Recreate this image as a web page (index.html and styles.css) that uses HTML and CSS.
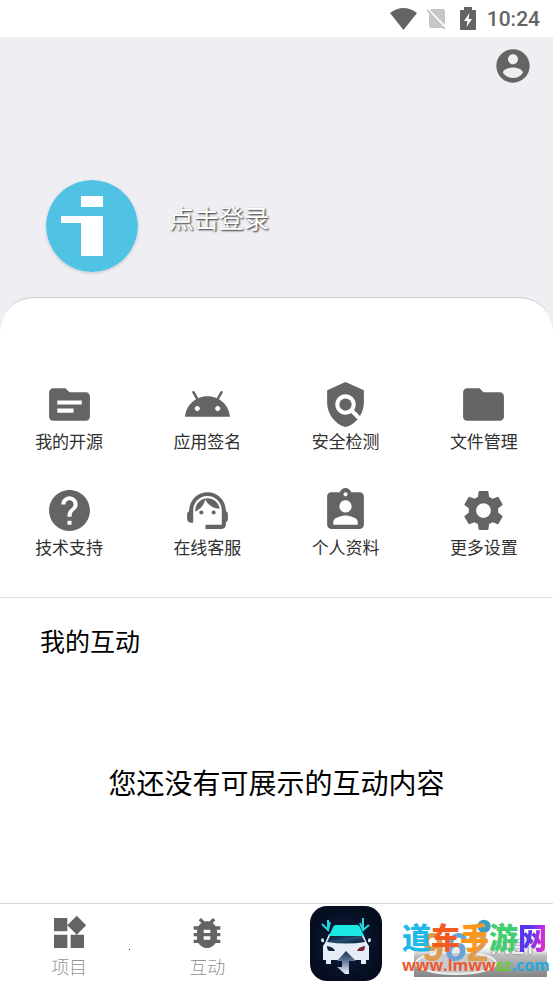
FILE: index.html
```html
<!DOCTYPE html>
<html lang="zh-CN">
<head>
<meta charset="utf-8">
<meta name="viewport" content="width=device-width, initial-scale=1">
<title>我的</title>
<link rel="stylesheet" href="styles.css">
</head>
<body>
<div class="status">
  <svg class="wifi" viewBox="0 0 27 22"><path d="M13.500 22L0 5Q13.500-5 27 5z"/></svg>
  <svg class="sim" viewBox="0 0 20 22"><path fill="#c6c6c6" d="M6 1h11q2 0 2 2v14L4 2zM3 5l15 15H5q-2 0-2-2z"/><path stroke="#c6c6c6" stroke-width="1.800" d="M1 2l18 19"/></svg>
  <svg class="battery" viewBox="0 0 16 23"><path fill-rule="evenodd" d="M4 0h8v3h3q1 0 1 1v18q0 1-1 1H1q-1 0-1-1V4q0-1 1-1h3zM9.500 6L4 14h3.500l-1 6L12 12H8.500z"/></svg>
  <span class="time">10:24</span>
</div>
<header class="hero">
  <button class="account" aria-label="账户"><svg viewBox="0 0 24 24"><path d="M12 2C6.480 2 2 6.480 2 12s4.480 10 10 10 10-4.480 10-10S17.520 2 12 2zm0 3c1.660 0 3 1.340 3 3s-1.340 3-3 3-3-1.340-3-3 1.340-3 3-3zm0 14.200c-2.500 0-4.710-1.280-6-3.220.03-1.990 4-3.080 6-3.080 1.990 0 5.970 1.090 6 3.080-1.290 1.940-3.500 3.220-6 3.220z"/></svg></button>
  <div class="profile">
    <svg class="avatar" viewBox="0 0 92 92"><circle cx="46" cy="46" r="46" fill="#50c3e5"/><path fill="#fff" d="M35 16h22v11H35zM15 36h42v40H35V43H15z"/></svg>
    <button class="login">点击登录</button>
  </div>
</header>
<main class="sheet">
  <div class="grid">
    <button class="tile"><svg viewBox="0 0 24 24"><path fill-rule="evenodd" d="M20 6h-8l-2-2H4c-1.100 0-1.990.9-1.990 2L2 18c0 1.100.9 2 2 2h16c1.100 0 2-.9 2-2V8c0-1.100-.9-2-2-2zM14 16H6v-2h8zM18 12H6v-2h12z"/></svg><span>我的开源</span></button>
    <button class="tile"><svg viewBox="0 0 24 24"><path d="M17.600 9.480l1.840-3.180c.16-.31.040-.69-.26-.85-.29-.15-.65-.06-.83.220l-1.880 3.240c-2.860-1.210-6.080-1.210-8.940 0L5.650 5.670c-.19-.29-.58-.38-.87-.2-.28.180-.37.540-.22.830L6.400 9.480C3.300 11.250 1.280 14.440 1 18h22c-.28-3.560-2.300-6.750-5.400-8.520zM7 15.250c-.69 0-1.250-.56-1.250-1.250S6.310 12.750 7 12.750 8.250 13.310 8.250 14 7.690 15.250 7 15.250zm10 0c-.69 0-1.250-.56-1.250-1.250s.56-1.250 1.250-1.250 1.250.56 1.250 1.250-.56 1.250-1.250 1.250z"/></svg><span>应用签名</span></button>
    <button class="tile"><svg viewBox="0 0 24 24"><path d="M21 5l-9-4-9 4v6c0 5.550 3.840 10.740 9 12 2.300-.56 4.330-1.900 5.880-3.710l-3.120-3.120c-1.940 1.290-4.580 1.070-6.290-.64-1.950-1.950-1.950-5.120 0-7.070s5.120-1.950 7.070 0c1.710 1.710 1.920 4.350.64 6.290l2.900 2.900C20.290 15.690 21 13.380 21 11V5z"/><circle cx="12" cy="12" r="3"/></svg><span>安全检测</span></button>
    <button class="tile"><svg viewBox="0 0 24 24"><path d="M10 4H4c-1.100 0-1.990.9-1.990 2L2 18c0 1.100.9 2 2 2h16c1.100 0 2-.9 2-2V8c0-1.100-.9-2-2-2h-8z"/></svg><span>文件管理</span></button>
    <button class="tile"><svg viewBox="0 0 24 24"><path d="M12 2C6.480 2 2 6.480 2 12s4.480 10 10 10 10-4.480 10-10S17.520 2 12 2zm1 17h-2v-2h2zm2.070-7.750l-.9.920C13.450 12.900 13 13.500 13 15h-2v-.5c0-1.100.45-2.100 1.170-2.830l1.240-1.260c.37-.36.590-.86.590-1.410 0-1.100-.9-2-2-2s-2 .9-2 2H8c0-2.210 1.790-4 4-4s4 1.790 4 4c0 .88-.36 1.680-.93 2.250z"/></svg><span>技术支持</span></button>
    <button class="tile"><svg viewBox="0 0 24 24"><path d="M21 12.220C21 6.730 16.740 3 12 3c-4.690 0-9 3.650-9 9.280-.6.340-1 .98-1 1.720v2c0 1.100.9 2 2 2h1v-6.100c0-3.870 3.130-7 7-7s7 3.130 7 7V19h-8v2h8c1.100 0 2-.9 2-2v-1.220c.59-.31 1-.92 1-1.640v-2.300c0-.7-.41-1.310-1-1.620z"/><circle cx="9" cy="13" r="1"/><circle cx="15" cy="13" r="1"/><path d="M18 11.030C17.520 8.180 15.040 6 12.050 6c-3.030 0-6.290 2.510-6.030 6.450 2.470-1.010 4.330-3.210 4.860-5.890 1.310 2.630 4 4.440 7.120 4.470z"/></svg><span>在线客服</span></button>
    <button class="tile"><svg viewBox="0 0 24 24"><path fill-rule="evenodd" d="M19 3h-4.180C14.400 1.840 13.300 1 12 1S9.600 1.840 9.180 3H5c-1.100 0-2 .9-2 2v14c0 1.100.9 2 2 2h14c1.100 0 2-.9 2-2V5c0-1.100-.9-2-2-2zm-7 0c.55 0 1 .45 1 1s-.45 1-1 1-1-.45-1-1 .45-1 1-1zm0 4c1.660 0 3 1.340 3 3s-1.340 3-3 3-3-1.340-3-3 1.340-3 3-3zm6 12H6v-1.400c0-2 4-3.100 6-3.100s6 1.100 6 3.100z"/></svg><span>个人资料</span></button>
    <button class="tile"><svg viewBox="0 0 24 24"><path d="M19.140 12.940c.04-.3.060-.61.060-.94 0-.32-.02-.64-.07-.94l2.030-1.580c.18-.14.230-.41.120-.61l-1.920-3.320c-.12-.22-.37-.29-.59-.22l-2.390.96c-.5-.38-1.030-.7-1.620-.94l-.36-2.540c-.04-.24-.24-.41-.48-.41h-3.840c-.24 0-.43.170-.47.410l-.36 2.540c-.59.240-1.130.570-1.620.940l-2.390-.96c-.22-.08-.47 0-.59.220L2.740 8.870c-.12.210-.08.470.12.610l2.030 1.580c-.05.300-.09.630-.09.940s.02.640.07.940l-2.030 1.580c-.18.140-.23.410-.12.610l1.920 3.320c.12.220.37.290.59.220l2.390-.96c.5.380 1.030.7 1.620.94l.36 2.540c.05.240.24.410.48.410h3.840c.24 0 .44-.17.470-.41l.36-2.540c.59-.24 1.130-.56 1.620-.94l2.390.96c.22.080.47 0 .59-.22l1.920-3.320c.12-.22.070-.47-.12-.61zM12 15.600c-1.980 0-3.600-1.620-3.600-3.600s1.620-3.600 3.600-3.600 3.600 1.620 3.600 3.600-1.620 3.600-3.600 3.600z"/></svg><span>更多设置</span></button>
  </div>
  <section class="activity">
    <h2>我的互动</h2>
    <p>您还没有可展示的互动内容</p>
  </section>
</main>
<nav class="tabs">
  <a class="tab" href="#projects"><svg viewBox="0 0 24 24"><path d="M13 13v8h8v-8zM3 21h8v-8H3zM3 3v8h8V3zM16.660 1.690L11 7.340 16.660 13l5.660-5.660z"/></svg><span>项目</span><i class="speck"></i></a>
  <a class="tab" href="#interact"><svg viewBox="0 0 24 24"><path d="M20 8h-2.810c-.45-.78-1.070-1.450-1.820-1.960L17 4.410 15.590 3l-2.170 2.170C12.960 5.060 12.490 5 12 5s-.96.060-1.410.170L8.410 3 7 4.410l1.620 1.630C7.880 6.550 7.260 7.220 6.810 8H4v2h2.090c-.05.330-.09.660-.09 1v1H4v2h2v1c0 .340.040.670.090 1H4v2h2.810c1.040 1.790 2.970 3 5.190 3s4.150-1.210 5.190-3H20v-2h-2.090c.05-.33.090-.66.090-1v-1h2v-2h-2v-1c0-.34-.04-.67-.09-1H20zm-6 8h-4v-2h4zm0-4h-4v-2h4z"/></svg><span>互动</span></a>
  <a class="tab" href="#app" aria-label="应用">
    <svg class="app" viewBox="0 0 72 75"><defs><radialGradient id="bg"><stop stop-color="#0b2145"/><stop offset="1" stop-color="#060d1f"/></radialGradient><linearGradient id="arrow" x2="0" y2="1"><stop stop-color="#1b2c52"/><stop offset=".5" stop-color="#6f83a8"/><stop offset="1" stop-color="#f2f6fb"/></linearGradient><linearGradient id="glass" x2="1" y2="1"><stop stop-color="#09182f"/><stop offset=".5" stop-color="#244c74"/><stop offset="1" stop-color="#07152b"/></linearGradient></defs><rect width="72" height="75" rx="17" fill="url(#bg)"/><path d="M19 28h34l4 9 2 3v14h-3v4h-5v-4H21v4h-5v-4h-3V40l2-3z" fill="#e4edf7"/><path d="M26 19h21q2 0 3 2l4 9H19l4-9q1-2 3-2z" fill="#1ce8e6"/><path d="M20 30h32l3 6q-19 3-38 0z" fill="url(#glass)"/><path d="M14 33q-3-2-3 1t3 2zM58 33q3-2 3 1t-3 2z" fill="#d5e0ef"/><path d="M17 40q7 1 8 5h-6q-2-1-2-5z" fill="#17233d"/><path d="M55 40q-7 1-8 5h6q2-1 2-5z" fill="#7c2532"/><path d="M36 45l-9 10h5v6h-5l8 7h4V55h7z" fill="url(#arrow)"/><path d="M18 14v10M12 18l6 6 2-8M53 12v12M50 17l3 7 6-5" fill="none" stroke="#25d4df" stroke-width="2"/></svg>
  </a>
  <a class="tab" href="#mine" aria-label="我的"><svg class="mine" viewBox="0 0 24 24"><circle cx="12" cy="8" r="4"/></svg></a>
  <div class="mark">
    <svg class="plate" viewBox="0 0 151 64"><defs><linearGradient id="plate" x2="0" y2="1"><stop stop-color="#ddd" stop-opacity=".1"/><stop offset=".3" stop-color="#bbb"/><stop offset="1" stop-color="#858585"/></linearGradient></defs><rect x="12" y="31" width="133" height="30" fill="url(#plate)"/><ellipse cx="54" cy="47" rx="40" ry="11" fill="#c9cccd" stroke="#eee" stroke-width="2"/></svg>
    <div class="under" aria-hidden="true"><b class="digits">9<i>6</i>2</b><b class="net">.NET</b></div>
    <div class="brand"><span class="c1">道</span><span class="c2">车</span><span class="c3">手</span><span class="c4">游</span><span class="c5">网</span></div>
    <div class="site"><span class="s1">www.lmww</span><span class="s2">sz</span><span class="s3">.com</span></div>
  </div>
</nav>
</body>
</html>
```
FILE: styles.css
```css
* { box-sizing: border-box; }
body {
  margin: 0;
  min-height: 100vh;
  display: flex;
  flex-direction: column;
  background: #fff;
  color: #000;
  font-family: "Noto Sans CJK SC", sans-serif;
}
button {
  border: 0;
  padding: 0;
  background: none;
  color: inherit;
  font: inherit;
  cursor: pointer;
}
svg { display: block; fill: #646464; }
.status {
  height: 37px;
  padding-right: 13px;
  display: flex;
  align-items: center;
  justify-content: flex-end;
}
.wifi { width: 27px; height: 22px; margin-right: 9px; }
.sim { width: 20px; height: 22px; margin-right: 14px; }
.battery { width: 16px; height: 23px; margin-right: 11px; }
.time {
  color: #646464;
  font: 500 21px/24px Roboto, sans-serif;
}
.hero {
  height: 334px;
  padding: 9px 20px 0;
  display: flex;
  flex-direction: column;
  background: #eeeef3;
  border-bottom: 1px solid #d8d8dc;
}
.account { align-self: flex-end; }
.account svg { width: 40px; height: 40px; }
.profile {
  margin: 94px 26px 0;
  display: flex;
  align-items: flex-start;
  gap: 31px;
}
.avatar {
  width: 92px;
  height: 92px;
  border-radius: 50%;
  box-shadow: 0 1px 3px #c4c8d0;
}
.login {
  margin-top: 19px;
  color: #fff;
  font-size: 25px;
  line-height: 36px;
  text-shadow: 1px 1px 2px #222;
}
.sheet {
  flex: 1;
  margin-top: -74px;
  padding-top: 82px;
  background: #fff;
  border-top: 1px solid #d0d0d3;
  border-radius: 34px 34px 0 0;
}
.grid {
  display: grid;
  grid-template-columns: repeat(4, 1fr);
  row-gap: 33px;
  padding-bottom: 38px;
  border-bottom: 1px solid #dedede;
}
.tile {
  display: flex;
  flex-direction: column;
  align-items: center;
  color: #303030;
  font-size: 17px;
  line-height: 24px;
}
.tile svg { width: 49px; height: 49px; }
.activity { padding: 24px 40px; }
h2 {
  margin: 0;
  font-size: 25px;
  font-weight: 400;
  line-height: 36px;
}
.activity p {
  margin: 104px 0 0;
  font-size: 28px;
  line-height: 40px;
  text-align: center;
}
.tabs {
  position: relative;
  height: 80px;
  display: grid;
  grid-template-columns: repeat(4, 1fr);
  border-top: 1px solid #d8d8d8;
}
.tab {
  position: relative;
  padding-top: 9px;
  display: flex;
  flex-direction: column;
  align-items: center;
  color: #959595;
  font-size: 18px;
  font-weight: 300;
  line-height: 26px;
  text-decoration: none;
}
.tab svg { width: 40px; height: 40px; }
.tab .app { width: 72px; height: 75px; margin-top: -7px; }
.tab .mine { fill: #3a9fc5; }
.speck {
  position: absolute;
  right: 8px;
  top: 45px;
  width: 1px;
  height: 1px;
  background: #223;
}
.mark {
  position: absolute;
  right: 0;
  bottom: 3px;
  width: 151px;
  height: 64px;
  white-space: nowrap;
}
.plate { position: absolute; inset: 0; }
.under {
  position: absolute;
  inset: 12px 0 0 20px;
  display: flex;
  gap: 2px;
  line-height: 38px;
}
.digits {
  color: #e09b4c;
  font-family: "Liberation Sans", sans-serif;
  font-size: 40px;
}
.digits i { color: #6ba4d4; }
.net {
  color: #eee;
  font-family: "Liberation Sans", sans-serif;
  font-size: 20px;
  text-shadow: 0 0 2px #333;
}
.brand, .site {
  position: relative;
  font-weight: 900;
}
.brand {
  margin-top: 3px;
  font-size: 29px;
  line-height: 34px;
}
.site {
  margin-top: 2px;
  font-family: "Open Sans", sans-serif;
  font-size: 16px;
  font-weight: 700;
  line-height: 20px;
}
.c1 { color: #20b8ea; }
.c2 { color: #f45b22; }
.c3 { color: #fb971c; }
.c4 { color: #42ce70; }
.c5 {
  background: linear-gradient(100deg, #5635ec 40%, #c12ee0 75%, #f0388a);
  background-clip: text;
  color: transparent;
}
.s1 { color: #ed5932; }
.s2 { color: #69cb36; }
.s3 { color: #25a9df; }
```
